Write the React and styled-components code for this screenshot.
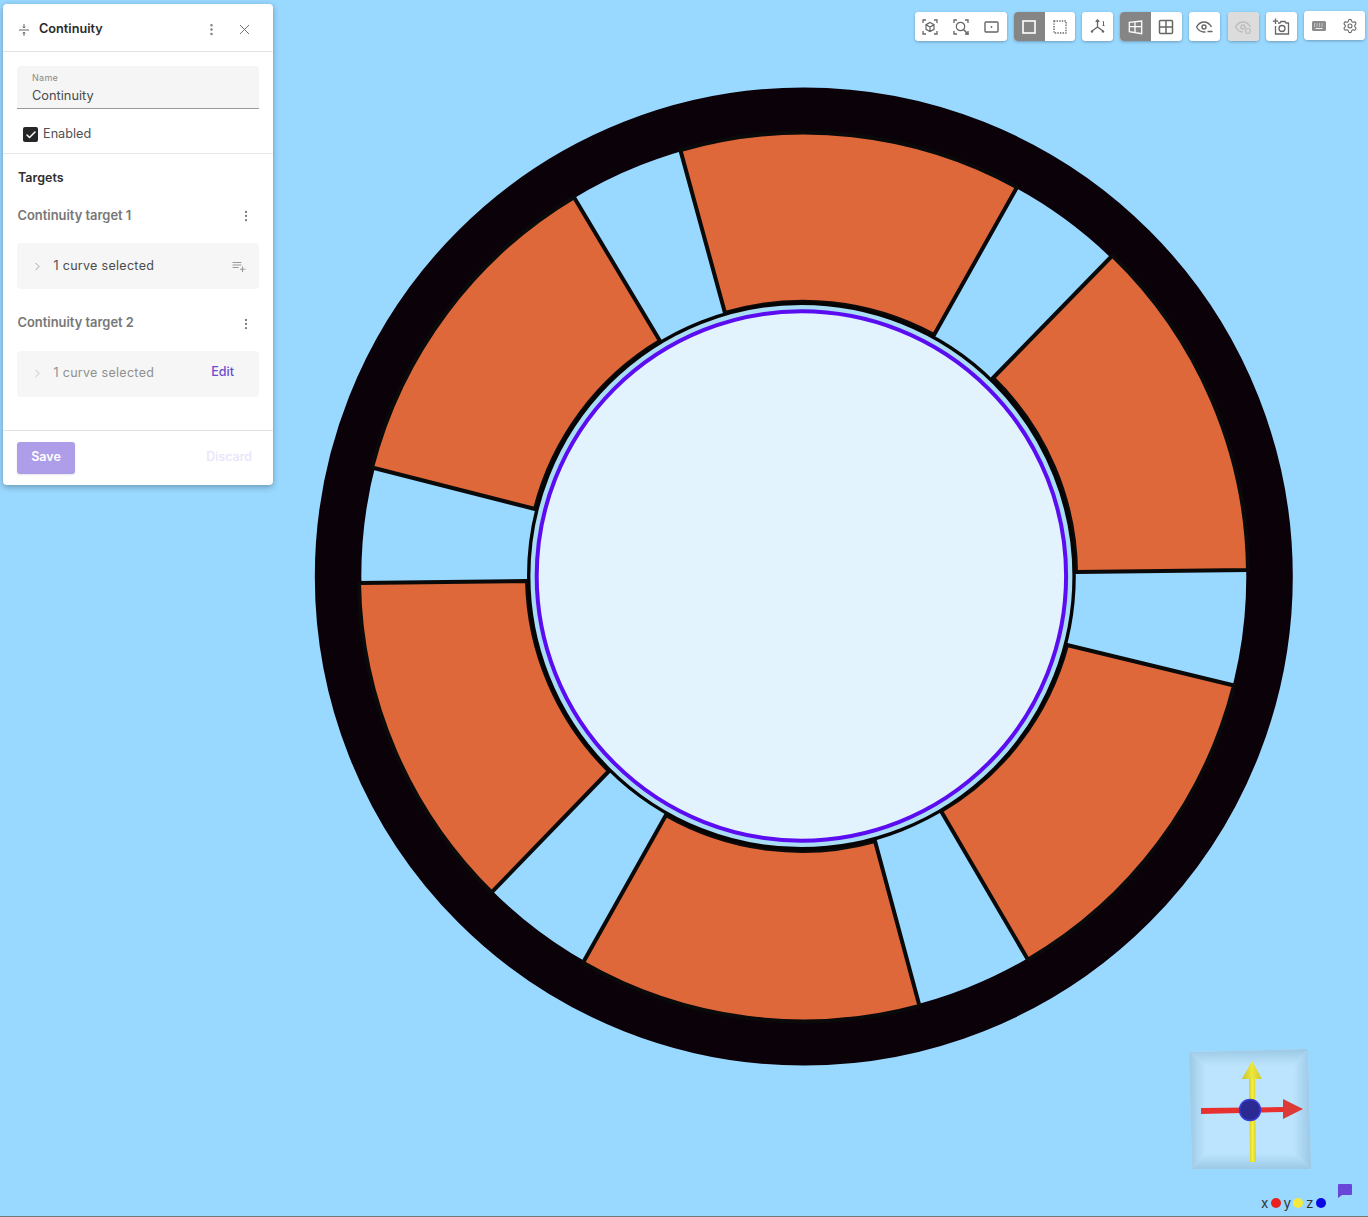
import React from "react";
import styled, { createGlobalStyle } from "styled-components";
import { Check, ChevronRight, EllipsisVertical, Settings, X } from "lucide-react";

const GlobalStyle = createGlobalStyle`
  html, body {
    margin: 0;
    padding: 0;
    overflow: hidden;
    background: #99d8ff;
    font-family: Inter, "Liberation Sans", sans-serif;
  }
  * { box-sizing: border-box; }
`;

const CX = 803.8;
const CY = 576.5;
const HUB_X = 801.4;
const HUB_Y = 576;

// each blade: outer start, outer end, inner end, inner start
const blades = [
  "M680.4 150.1 A444 444 0 0 1 1017 187.2 L934 335 A275 275 0 0 0 725 313 Z",
  "M1112.4 255.5 A444 444 0 0 1 1248 570 L1076 572 A275 275 0 0 0 993 378 Z",
  "M1234 685.5 A444 444 0 0 1 1028 959.7 L941 811 A275 275 0 0 0 1067 645 Z",
  "M919.5 1005.9 A444 444 0 0 1 583 962.7 L666 815 A275 275 0 0 0 875 841 Z",
  "M491.6 892.4 A444 444 0 0 1 359 583 L527 581 A275 275 0 0 0 609 771 Z",
  "M372 467.5 A444 444 0 0 1 574 197.3 L660 341 A275 275 0 0 0 535 509 Z",
];

function Scene() {
  return (
    <SceneSvg viewBox="0 0 1368 1217">
      <circle cx={CX} cy={CY} r={465.75} fill="none" stroke="#0a0208" strokeWidth={46.5} />
      {blades.map((d) => (
        <path key={d} d={d} fill="#df683a" stroke="#0a0a0a" strokeWidth={4} strokeLinejoin="round" />
      ))}
      <circle cx={HUB_X} cy={HUB_Y} r={272.7} fill="#a9dcf5" stroke="#050505" strokeWidth={3.4} />
      <circle cx={HUB_X} cy={HUB_Y} r={264.7} fill="#e3f3fe" stroke="#5b0cf0" strokeWidth={4} />
    </SceneSvg>
  );
}

function Gizmo() {
  return (
    <GizmoSvg viewBox="0 0 130 130">
      <defs>
        <linearGradient id="bevelTop" x1="0" y1="0" x2="0" y2="1">
          <stop offset="0" stopColor="#9cc8e4" />
          <stop offset="1" stopColor="#bce4fe" />
        </linearGradient>
        <linearGradient id="bevelBottom" x1="0" y1="1" x2="0" y2="0">
          <stop offset="0" stopColor="#9dc9e5" />
          <stop offset="1" stopColor="#bce4fe" />
        </linearGradient>
        <linearGradient id="bevelLeft" x1="0" y1="0" x2="1" y2="0">
          <stop offset="0" stopColor="#9cc8e4" />
          <stop offset="1" stopColor="#bce4fe" />
        </linearGradient>
        <linearGradient id="bevelRight" x1="1" y1="0" x2="0" y2="0">
          <stop offset="0" stopColor="#9cc8e4" />
          <stop offset="1" stopColor="#bce4fe" />
        </linearGradient>
        <linearGradient id="shaft" x1="0" y1="0" x2="1" y2="0">
          <stop offset="0" stopColor="#d2cb2c" />
          <stop offset="0.5" stopColor="#f6f03e" />
          <stop offset="1" stopColor="#d8d030" />
        </linearGradient>
        <linearGradient id="head" x1="0" y1="0" x2="1" y2="0">
          <stop offset="0" stopColor="#c7c12c" />
          <stop offset="0.5" stopColor="#eee83c" />
          <stop offset="1" stopColor="#cfc82e" />
        </linearGradient>
      </defs>
      <polygon points="4,7 123,4 126,124 7,124" fill="#bce4fe" />
      <polygon points="4,7 123,4 108,21 21,21" fill="url(#bevelTop)" />
      <polygon points="7,124 126,124 108,108 21,108" fill="url(#bevelBottom)" />
      <polygon points="4,7 21,21 21,108 7,124" fill="url(#bevelLeft)" />
      <polygon points="123,4 126,124 108,108 108,21" fill="url(#bevelRight)" />
      <polygon points="64,33 70,33 71,117 65,117" fill="url(#shaft)" />
      <polygon points="67,16 57,34 77,34" fill="url(#head)" />
      <polygon points="16,63 98,62 98,67 16,69" fill="#e8312e" />
      <polygon points="98,54 118,64 98,74" fill="#dc3a36" />
      <circle cx={65} cy={65} r={10.5} fill="#2a2a92" stroke="#3a3ad6" strokeWidth={1.5} />
    </GizmoSvg>
  );
}

const Ico = ({ children, size = 20 }) => (
  <svg width={size} height={size} viewBox="0 0 20 20" fill="none" stroke="currentColor" strokeWidth={1.2}>
    {children}
  </svg>
);

const Corners = () => (
  <path d="M3 6V3h3M14 3h3v3M3 14v3h3M17 14v3h-3" strokeWidth={1.3} />
);

const toolbar = [
  [
    {
      icon: (
        <Ico>
          <Corners />
          <path d="M10 5.5l4 2.2v4.6l-4 2.2-4-2.2V7.7zM6 7.7l4 2.3 4-2.3M10 10v4.5" />
        </Ico>
      ),
    },
    {
      icon: (
        <Ico>
          <Corners />
          <circle cx={9.5} cy={9.5} r={4.2} />
          <path d="M12.5 12.5l5 5" strokeWidth={1.5} />
        </Ico>
      ),
    },
    {
      icon: (
        <Ico>
          <rect x={3} y={5} width={13} height={10} rx={1} strokeWidth={1.4} />
          <circle cx={9.5} cy={10} r={0.9} fill="currentColor" stroke="none" />
        </Ico>
      ),
    },
  ],
  [
    {
      active: true,
      icon: (
        <Ico>
          <rect x={4} y={4} width={12} height={12} strokeWidth={1.6} />
        </Ico>
      ),
    },
    {
      icon: (
        <Ico>
          <rect x={4} y={4} width={12} height={12} strokeWidth={1.4} strokeDasharray="1.4 1.2" />
        </Ico>
      ),
    },
  ],
  [
    {
      icon: (
        <Ico>
          <path d="M9.5 10V3M9.5 10L4 14M9.5 10l5.5 4M7.7 4.8L9.5 3l1.8 1.8" strokeWidth={1.3} />
          <circle cx={4} cy={14.5} r={1.2} fill="currentColor" stroke="none" />
          <circle cx={15} cy={14.5} r={1.2} fill="currentColor" stroke="none" />
          <path d="M15.5 4.5v4M14.5 8.5h2M14.7 4.5h.8" strokeWidth={1} />
        </Ico>
      ),
    },
  ],
  [
    {
      active: true,
      icon: (
        <Ico>
          <path d="M3.3 5.3L15.7 4v12.7l-12.4-2zM9 4.7v11M3.3 9.7h12.4" strokeWidth={1.3} />
        </Ico>
      ),
    },
    {
      icon: (
        <Ico>
          <rect x={3.5} y={3.5} width={13} height={13} rx={1} strokeWidth={1.5} />
          <path d="M10 3.5v13M3.5 10h13" strokeWidth={1.5} />
        </Ico>
      ),
    },
  ],
  [
    {
      icon: (
        <Ico>
          <path d="M2.5 10c2-3.4 4.6-5 7.5-5s5.5 1.6 7.5 5" strokeWidth={1.4} />
          <path d="M2.5 10c2 3.4 4.6 5 7.5 5h1.5" strokeWidth={1.4} />
          <circle cx={10} cy={10} r={2} strokeWidth={1.4} />
          <path d="M13.5 14.5h5" strokeWidth={1.5} />
        </Ico>
      ),
    },
  ],
  [
    {
      disabled: true,
      icon: (
        <Ico>
          <path d="M2.5 10c2-3.4 4.6-5 7.5-5s5.5 1.6 7.5 5" strokeWidth={1.4} />
          <path d="M2.5 10c2 3.4 4.6 5 7.5 5" strokeWidth={1.4} />
          <circle cx={10} cy={10} r={2} strokeWidth={1.4} />
          <circle cx={15} cy={14} r={2.5} strokeWidth={1.2} />
        </Ico>
      ),
    },
  ],
  [
    {
      icon: (
        <Ico>
          <path d="M7 6h2l1-1.5h4L15 6h2.5v11h-13V9" strokeWidth={1.3} />
          <circle cx={11} cy={11.5} r={3} strokeWidth={1.3} />
          <path d="M4.5 1.5V7M1.8 4.2h5.4" strokeWidth={1.3} />
        </Ico>
      ),
    },
  ],
];

function Toolbar() {
  return (
    <Bar>
      {toolbar.map((group, i) => (
        <BarGroup key={i} $spaced={group[0].disabled}>
          {group.map((b, j) => (
            <BarButton key={j} $active={b.active} $disabled={b.disabled} $wide={group.length === 1}>
              {b.icon}
            </BarButton>
          ))}
        </BarGroup>
      ))}
      <BarGroup $raised>
        <BarButton $muted>
          <Ico>
            <rect x={3} y={5} width={14} height={10} rx={1.5} fill="currentColor" stroke="none" />
            <path d="M5 8h1M7.5 8h1M10 8h1M12.5 8h1M5 10h1M7.5 10h1M10 10h1M12.5 10h1M6.5 12.5h7" stroke="#fff" strokeWidth={0.9} />
          </Ico>
        </BarButton>
        <BarButton>
          <Settings size={16} strokeWidth={1.6} />
        </BarButton>
      </BarGroup>
    </Bar>
  );
}

function Target({ title, dimmed }) {
  return (
    <>
      <TargetHead>
        <TargetTitle>{title}</TargetTitle>
        <DotsButton>
          <EllipsisVertical size={14} strokeWidth={2} />
        </DotsButton>
      </TargetHead>
      <TargetBox>
        <Chevron $dimmed={dimmed}>
          <ChevronRight size={13} strokeWidth={1.5} />
        </Chevron>
        <BoxText $dimmed={dimmed}>1 curve selected</BoxText>
        {dimmed ? (
          <EditLink>Edit</EditLink>
        ) : (
          <AddList viewBox="0 0 14 12" fill="none" stroke="currentColor" strokeWidth={1.1}>
            <path d="M0.5 1.5h9M0.5 4h9M0.5 6.5h6M10.5 5.5V11M8 8.3h5.5" />
          </AddList>
        )}
      </TargetBox>
    </>
  );
}

export default function App() {
  return (
    <>
      <GlobalStyle />
      <Viewport>
        <Scene />
        <Panel>
          <PanelHeader>
            <svg width="10" height="14" viewBox="0 0 10 14" fill="none" stroke="#666" strokeWidth="1">
              <path d="M0 7h10M5 1v4M5 9v4M3.8 3.5L5 5l1.2-1.5M3.8 10.5L5 9l1.2 1.5" />
            </svg>
            <PanelTitle>Continuity</PanelTitle>
            <HeaderDots>
              <EllipsisVertical size={15} strokeWidth={2} />
            </HeaderDots>
            <CloseButton>
              <X size={17} strokeWidth={1.4} />
            </CloseButton>
          </PanelHeader>

          <NameSection>
            <NameField>
              <NameLabel>Name</NameLabel>
              <NameValue>Continuity</NameValue>
            </NameField>
            <EnabledRow>
              <CheckMark>
                <Check size={12} strokeWidth={3} color="#fff" />
              </CheckMark>
              Enabled
            </EnabledRow>
          </NameSection>

          <TargetsSection>
            <SectionTitle>Targets</SectionTitle>
            <Target title="Continuity target 1" />
            <Target title="Continuity target 2" dimmed />
          </TargetsSection>

          <PanelFooter>
            <SaveButton>Save</SaveButton>
            <DiscardButton>Discard</DiscardButton>
          </PanelFooter>
        </Panel>

        <Toolbar />
        <Gizmo />
        <Legend>
          x<LegendDot $color="#e8231f" />
          y<LegendDot $color="#f3ea3c" />
          z<LegendDot $color="#0a0ae6" />
        </Legend>
        <ChatIcon viewBox="0 0 14 14">
          <path d="M1 0h12a1 1 0 0 1 1 1v9a1 1 0 0 1-1 1H4l-4 3V1a1 1 0 0 1 1-1z" fill="#6a46d8" />
        </ChatIcon>
      </Viewport>
    </>
  );
}

const Viewport = styled.div`
  position: relative;
  width: 100%;
  height: 100vh;
  overflow: hidden;
  background: #99d8ff;
  border-bottom: 1px solid #777;
`;

const SceneSvg = styled.svg`
  position: absolute;
  left: 0;
  top: 0;
  width: 1368px;
  height: 1217px;
`;

const Panel = styled.div`
  position: absolute;
  left: 3px;
  top: 4px;
  width: 270px;
  height: 481px;
  display: flex;
  flex-direction: column;
  background: #fff;
  border-radius: 4px;
  box-shadow: 0 2px 6px rgba(0, 0, 0, 0.3);
`;

const PanelHeader = styled.div`
  display: flex;
  align-items: center;
  height: 48px;
  padding: 4px 20px 0 16px;
  border-bottom: 1px solid #e3e3e3;
`;

const PanelTitle = styled.div`
  flex: 1;
  margin-left: 10px;
  margin-top: -2px;
  font-size: 12.7px;
  font-weight: 600;
  color: #2b2b2b;
`;

const HeaderDots = styled.div`
  display: flex;
  color: #808080;
  margin-right: 17px;
`;

const CloseButton = styled.div`
  display: flex;
  color: #707070;
`;

const NameSection = styled.div`
  height: 102px;
  padding: 14px 14px 0;
  border-bottom: 1px solid #e6e6e6;
`;

const NameField = styled.div`
  height: 43px;
  padding: 6px 15px 0;
  background: #f5f5f5;
  border-radius: 4px 4px 0 0;
  border-bottom: 1px solid #9a9a9a;
`;

const NameLabel = styled.div`
  font-size: 9px;
  line-height: 11px;
  letter-spacing: 0.3px;
  color: #8a8a8a;
`;

const NameValue = styled.div`
  margin-top: 5px;
  font-size: 12.8px;
  line-height: 16px;
  color: #4a4a4a;
`;

const EnabledRow = styled.div`
  display: flex;
  align-items: center;
  gap: 5px;
  margin: 17px 0 0 6px;
  font-size: 12.7px;
  line-height: 16px;
  color: #505050;
`;

const CheckMark = styled.span`
  display: flex;
  align-items: center;
  justify-content: center;
  width: 15px;
  height: 15px;
  margin-top: 1px;
  background: #262626;
  border-radius: 2px;
`;

const TargetsSection = styled.div`
  height: 277px;
  padding: 16px 14px 0;
  border-bottom: 1px solid #e3e3e3;
`;

const SectionTitle = styled.div`
  font-size: 12.5px;
  line-height: 16px;
  font-weight: 600;
  color: #2e2e2e;
  padding-left: 1px;
`;

const TargetHead = styled.div`
  display: flex;
  align-items: center;
  justify-content: space-between;
  height: 16px;
  margin-top: 21px;
  padding: 0 6px 0 0.5px;

  & ~ & {
    margin-top: 25.2px;
  }
`;

const TargetTitle = styled.div`
  font-size: 12.9px;
  font-weight: 600;
  color: #777;
`;

const DotsButton = styled.div`
  display: flex;
  margin-top: 2px;
  color: #808080;
`;

const TargetBox = styled.div`
  display: flex;
  align-items: center;
  height: 46px;
  margin-top: 20.4px;
  padding: 0 13px 2px 14px;
  background: #f6f6f6;
  border-radius: 4px;
`;

const Chevron = styled.span`
  display: flex;
  margin-top: 2px;
  color: ${(p) => (p.$dimmed ? "#b5b5b5" : "#8f8f8f")};
`;

const BoxText = styled.div`
  flex: 1;
  margin-left: 9.5px;
  font-size: 12.5px;
  letter-spacing: 0.3px;
  color: ${(p) => (p.$dimmed ? "#909090" : "#4c4c4c")};
`;

const EditLink = styled.div`
  margin-right: 12px;
  margin-top: -2px;
  font-size: 12.5px;
  font-weight: 500;
  color: #6a4bd0;
`;

const AddList = styled.svg`
  width: 14px;
  height: 12px;
  margin-top: 3px;
  color: #9a9a9a;
`;

const PanelFooter = styled.div`
  flex: 1;
  display: flex;
  align-items: center;
  justify-content: space-between;
  padding: 0 21px 0 14px;
`;

const SaveButton = styled.div`
  display: flex;
  align-items: center;
  justify-content: center;
  width: 58px;
  height: 32px;
  padding-bottom: 3px;
  background: #ae9de8;
  border-radius: 3px;
  box-shadow: 0 1px 2px rgba(0, 0, 0, 0.1);
  color: #fff;
  font-size: 12.5px;
  font-weight: 600;
`;

const DiscardButton = styled.div`
  margin-bottom: 3px;
  font-size: 12.5px;
  font-weight: 500;
  color: #e8e4f8;
`;

const Bar = styled.div`
  position: absolute;
  top: 12px;
  left: 915px;
  display: flex;
  align-items: flex-start;
  gap: 7px;
`;

const BarGroup = styled.div`
  display: flex;
  height: 29px;
  margin-top: ${(p) => (p.$raised ? "-1px" : "0")};
  margin-left: ${(p) => (p.$spaced ? "1px" : "0")};
  border-radius: 4px;
  overflow: hidden;
  background: #fff;
  box-shadow: 0 1px 3px rgba(0, 0, 0, 0.28);
`;

const BarButton = styled.div`
  display: flex;
  align-items: center;
  justify-content: center;
  width: ${(p) => (p.$wide ? "31px" : "30.67px")};
  color: ${(p) => (p.$active ? "#fff" : p.$disabled ? "#bdbdbd" : p.$muted ? "#8c8c8c" : "#666")};
  background: ${(p) => (p.$active ? "#858585" : p.$disabled ? "#dcdcdc" : "#fff")};
`;

const GizmoSvg = styled.svg`
  position: absolute;
  left: 1185px;
  top: 1045px;
  width: 130px;
  height: 130px;
`;

const Legend = styled.div`
  position: absolute;
  left: 1261px;
  top: 1194.5px;
  display: flex;
  align-items: center;
  font-size: 13.5px;
  line-height: 16px;
  color: #333;
`;

const LegendDot = styled.span`
  width: 10px;
  height: 10px;
  margin: 1px 2.5px 0 2.5px;
  border-radius: 50%;
  background: ${(p) => p.$color};
`;

const ChatIcon = styled.svg`
  position: absolute;
  left: 1338px;
  top: 1184px;
  width: 14px;
  height: 14px;
`;
